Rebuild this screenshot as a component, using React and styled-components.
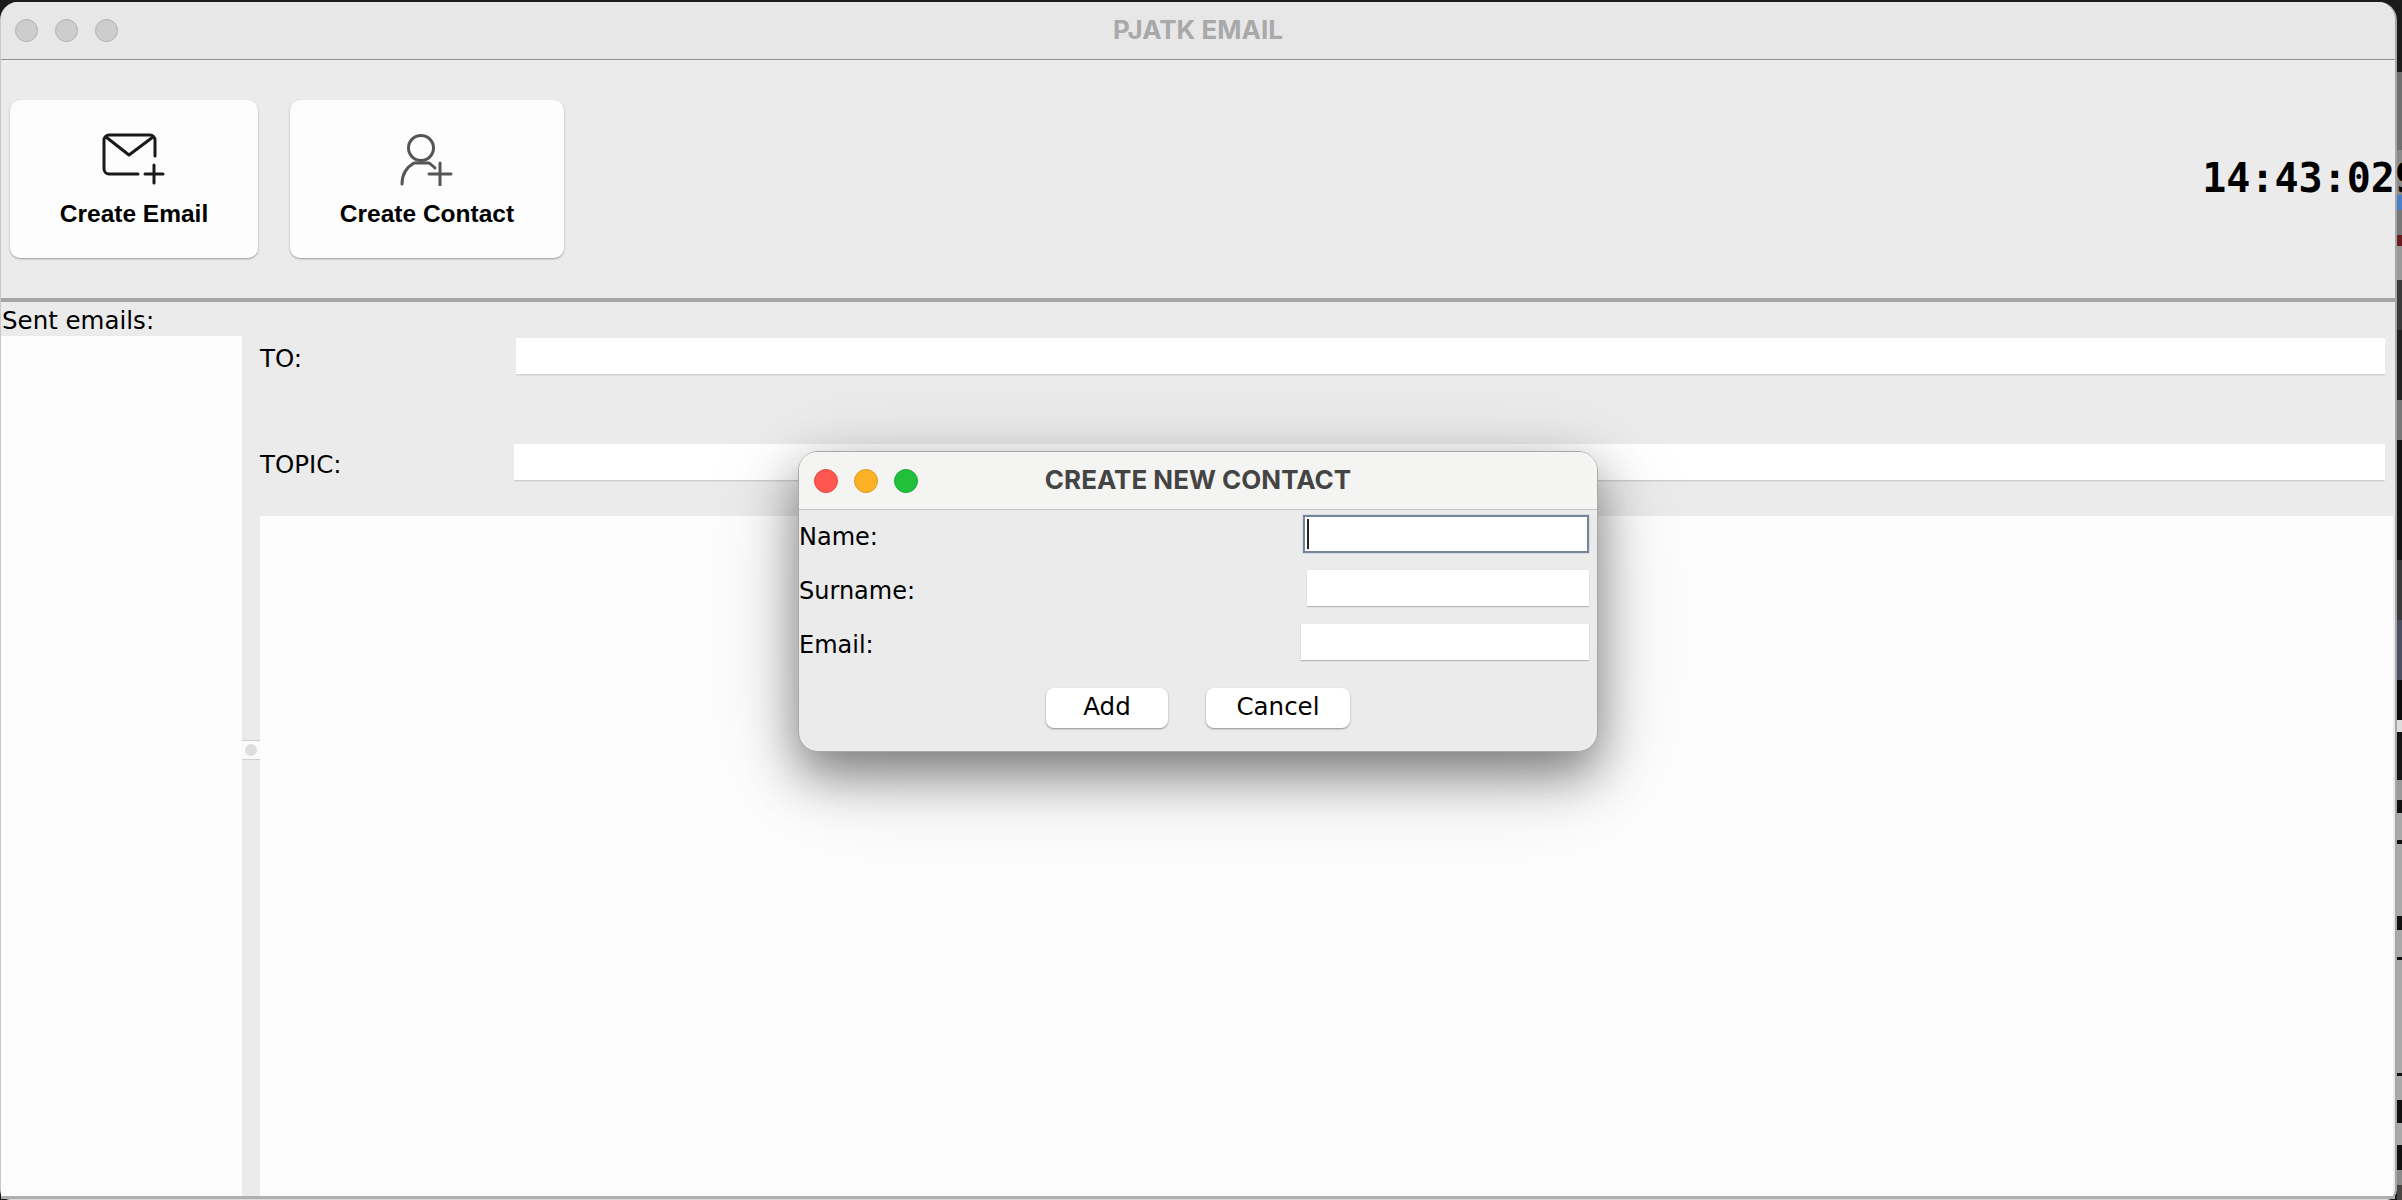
import React from "react";
import styled, { createGlobalStyle } from "styled-components";

const GlobalStyle = createGlobalStyle`
  html, body {
    margin: 0;
    padding: 0;
    width: 2402px;
    height: 1200px;
    overflow: hidden;
    background: #1b1b1b;
  }
`;

const Page = styled.div`
  position: relative;
  display: flex;
  width: 2402px;
  height: 1200px;
  padding-top: 2px;
  box-sizing: border-box;
  font-family: "DejaVu Sans", sans-serif;
  color: #000;
`;

const Window = styled.div`
  position: relative;
  z-index: 1;
  display: flex;
  flex-direction: column;
  width: 2397px;
  height: 1198px;
  box-sizing: border-box;
  background: #ebebeb;
  border-left: 1px solid #c9c9c9;
  border-right: 2px solid #a6a6a6;
  border-bottom: 1px solid #dcdcdc;
  border-radius: 18px 18px 10px 10px;
`;

// bit of whatever sits behind the window on the desktop
const DesktopStrip = styled.div`
  flex: 1;
  margin-top: -2px;
  background: linear-gradient(
    to bottom,
    #1b1b1b 0 72px,
    #6f6f6f 72px 150px,
    #8a8a8a 150px 195px,
    #4a80c8 195px 210px,
    #777 210px 235px,
    #6a1c20 235px 246px,
    #999 246px 280px,
    #3a3a3a 280px 330px,
    #222 330px 400px,
    #777 400px 440px,
    #141414 440px 560px,
    #3a3a3a 560px 620px,
    #4a5060 620px 680px,
    #0c0c0c 680px 720px,
    #ddd 720px 732px,
    #151515 732px 780px,
    #999 780px 800px,
    #111 800px 813px,
    #a9a9a9 813px 840px,
    #111 840px 844px,
    #a9a9a9 844px 916px,
    #111 916px 930px,
    #a9a9a9 930px 957px,
    #111 957px 960px,
    #a9a9a9 960px 1073px,
    #111 1073px 1076px,
    #a9a9a9 1076px 1100px,
    #111 1100px 1123px,
    #a9a9a9 1123px 1145px,
    #111 1145px 1170px,
    #8a8a8a 1170px 1185px,
    #4a4444 1185px 1200px
  );
`;

const TitleBar = styled.div`
  display: flex;
  align-items: center;
  position: relative;
  flex: none;
  height: 57px;
  padding-left: ${(p) => (p.$dialog ? "15px" : "14px")};
  background: ${(p) => (p.$dialog ? "#f4f4f2" : "#e7e7e7")};
  border-bottom: 1px solid ${(p) => (p.$dialog ? "#c4c4c4" : "#8f8f8f")};
  border-radius: 18px 18px 0 0;
`;

const Lights = styled.div`
  display: flex;
  gap: ${(p) => p.$gap}px;
`;

const Light = styled.span`
  display: block;
  width: ${(p) => p.$size}px;
  height: ${(p) => p.$size}px;
  border-radius: 50%;
  box-sizing: border-box;
  background: ${(p) => p.$color};
  border: 1px solid ${(p) => p.$edge};
`;

const WindowTitle = styled.div`
  position: absolute;
  left: 0;
  right: 0;
  top: 0;
  bottom: 3px;
  display: flex;
  align-items: center;
  justify-content: center;
  font-family: "Inter", "Liberation Sans", sans-serif;
  font-weight: 700;
  font-size: 26px;
  color: ${(p) => (p.$dialog ? "#444" : "#a9a9a9")};
`;

const Toolbar = styled.div`
  display: flex;
  align-items: center;
  flex: none;
  height: 238px;
  padding-left: 9px;
  gap: 32px;
  border-bottom: 4px solid #a5a5a5;
`;

const ActionButton = styled.button`
  display: flex;
  flex-direction: column;
  align-items: center;
  width: ${(p) => p.$width}px;
  height: 158px;
  padding: 32px 0 0;
  box-sizing: border-box;
  background: #fdfdfd;
  border: none;
  border-radius: 10px;
  box-shadow: 0 1px 2px rgba(0, 0, 0, 0.35);
  font-family: "Liberation Sans", Arial, sans-serif;
  font-weight: 700;
  font-size: 24.5px;
  color: #000;
`;

const ActionIcon = styled.svg`
  display: block;
  flex: none;
  width: 64px;
  height: 54px;
  margin-bottom: 14px;
  fill: none;
  stroke: ${(p) => p.$color};
  stroke-width: 3;
  stroke-linecap: round;
  stroke-linejoin: round;
`;

const Clock = styled.div`
  margin-left: auto;
  margin-right: -24px;
  margin-top: -2px;
  flex: none;
  font-family: "DejaVu Sans Mono", monospace;
  font-weight: 700;
  font-size: 40px;
  line-height: 48px;
  white-space: nowrap;
`;

const SentLabel = styled.div`
  flex: none;
  height: 34px;
  padding-left: 1px;
  font-size: 24.5px;
  line-height: 38px;
`;

const Split = styled.div`
  flex: 1;
  min-height: 0;
  display: grid;
  grid-template-columns: 241px 18px 1fr;
  border-bottom: 3px solid #afafaf;
`;

const SentList = styled.div`
  background: #fdfdfd;
`;

const Gutter = styled.div`
  display: flex;
  align-items: center;
  justify-content: center;
  padding-bottom: 33px;
`;

const GutterGrip = styled.div`
  display: flex;
  align-items: center;
  justify-content: center;
  width: 100%;
  height: 18px;
  background: #fafafa;
  border-top: 1px solid #cfcfcf;
  border-bottom: 1px solid #cfcfcf;

  &::after {
    content: "";
    width: 12px;
    height: 12px;
    border-radius: 50%;
    background: #dedede;
  }
`;

const Editor = styled.div`
  display: flex;
  flex-direction: column;
  min-width: 0;
  padding-top: 2px;
`;

const FormRow = styled.div`
  display: flex;
  align-items: center;
  flex: none;
  height: 36px;
  margin-bottom: ${(p) => p.$after}px;
  padding-right: 10px;
`;

const RowLabel = styled.label`
  flex: none;
  width: ${(p) => p.$width}px;
  padding-top: 6px;
  font-size: 24.5px;
  line-height: 32px;
`;

const LongField = styled.div`
  flex: 1;
  height: 36px;
  background: #fff;
  box-shadow: 0 2px 0 -0.5px #cfcfcf;
`;

const MessageArea = styled.div`
  flex: 1;
  margin-right: 2px;
  background: #fdfdfd;
`;

const Dialog = styled.div`
  position: absolute;
  z-index: 2;
  left: 798px;
  top: 451px;
  width: 800px;
  height: 301px;
  display: flex;
  flex-direction: column;
  box-sizing: border-box;
  background: #ebebeb;
  border: 1px solid #a8a8a8;
  border-radius: 20px;
  box-shadow: 0 22px 50px rgba(0, 0, 0, 0.46), 0 24px 110px rgba(0, 0, 0, 0.14);
`;

const DialogBody = styled.div`
  display: flex;
  flex-direction: column;
  padding: 5px 8px 0 0;
`;

const DialogRow = styled.div`
  display: flex;
  align-items: center;
  justify-content: space-between;
  height: ${(p) => p.$height}px;
  margin-bottom: ${(p) => p.$after}px;
`;

const DialogLabel = styled.label`
  padding-top: 6px;
  font-size: 24px;
  line-height: 32px;
`;

const SmallField = styled.div`
  position: relative;
  width: ${(p) => p.$width}px;
  height: ${(p) => p.$height}px;
  box-sizing: border-box;
  background: #fff;
  border: ${(p) => (p.$focused ? "2px solid #74869e" : "none")};
  box-shadow: ${(p) =>
    p.$focused ? "0 0 1px #74869e" : "0 1px 1px 0 #b8b8b8, 0 0 1px #dcdcdc"};

  ${(p) =>
    p.$focused &&
    `&::after {
      content: "";
      position: absolute;
      left: 2px;
      top: 2px;
      bottom: 2px;
      width: 2px;
      background: #222;
    }`}
`;

const DialogActions = styled.div`
  display: flex;
  justify-content: center;
  gap: 38px;
  margin-top: 28px;
  padding-left: 8px;
`;

const DialogButton = styled.button`
  width: ${(p) => p.$width}px;
  height: 40px;
  padding: 0 0 3px;
  background: #fff;
  border: none;
  border-radius: 8px;
  box-shadow: 0 1px 2px rgba(0, 0, 0, 0.4);
  font-family: "DejaVu Sans", sans-serif;
  font-size: 24.5px;
  color: #000;
`;

const fields = [
  { label: "Name:", width: 286, height: 38, after: 17, focused: true },
  { label: "Surname:", width: 282, height: 36, after: 18 },
  { label: "Email:", width: 288, height: 36, after: 0 },
];

const App = () => {
  return (
    <Page>
      <GlobalStyle />
      <Window>
        <TitleBar>
          <Lights $gap={17}>
            <Light $size={23} $color="#cdcdcd" $edge="#b2b2b2" />
            <Light $size={23} $color="#cdcdcd" $edge="#b2b2b2" />
            <Light $size={23} $color="#cdcdcd" $edge="#b2b2b2" />
          </Lights>
          <WindowTitle>PJATK EMAIL</WindowTitle>
        </TitleBar>

        <Toolbar>
          <ActionButton $width={248}>
            <ActionIcon $color="#1a1a1a" viewBox="0 0 64 54">
              <path d="M53 24V8a5 5 0 0 0-5-5H7a5 5 0 0 0-5 5v29a5 5 0 0 0 5 5h29" />
              <path d="M4 5l23 18L51 5" />
              <path d="M52 33v18M43 42h18" />
            </ActionIcon>
            Create Email
          </ActionButton>
          <ActionButton $width={274}>
            <ActionIcon $color="#555" viewBox="0 0 64 54">
              <circle cx="26" cy="16" r="12.5" />
              <path d="M7 52c0-10 5-17 12-21h15c2 1 4 3 6 5" />
              <path d="M45 31v22M34 42h22" />
            </ActionIcon>
            Create Contact
          </ActionButton>
          <Clock>14:43:029</Clock>
        </Toolbar>

        <SentLabel>Sent emails:</SentLabel>
        <Split>
          <SentList />
          <Gutter>
            <GutterGrip />
          </Gutter>
          <Editor>
            <FormRow $after={70}>
              <RowLabel $width={256}>TO:</RowLabel>
              <LongField />
            </FormRow>
            <FormRow $after={36}>
              <RowLabel $width={254}>TOPIC:</RowLabel>
              <LongField />
            </FormRow>
            <MessageArea />
          </Editor>
        </Split>
      </Window>
      <DesktopStrip />

      <Dialog>
        <TitleBar $dialog>
          <Lights $gap={16}>
            <Light $size={24} $color="#fe5650" $edge="#e4483f" />
            <Light $size={24} $color="#fdb126" $edge="#e09a1c" />
            <Light $size={24} $color="#22c03a" $edge="#1ea832" />
          </Lights>
          <WindowTitle $dialog>CREATE NEW CONTACT</WindowTitle>
        </TitleBar>
        <DialogBody>
          {fields.map((f) => (
            <DialogRow key={f.label} $height={f.height} $after={f.after}>
              <DialogLabel>{f.label}</DialogLabel>
              <SmallField $width={f.width} $height={f.height} $focused={f.focused} />
            </DialogRow>
          ))}
          <DialogActions>
            <DialogButton $width={122}>Add</DialogButton>
            <DialogButton $width={144}>Cancel</DialogButton>
          </DialogActions>
        </DialogBody>
      </Dialog>
    </Page>
  );
};

export default App;
